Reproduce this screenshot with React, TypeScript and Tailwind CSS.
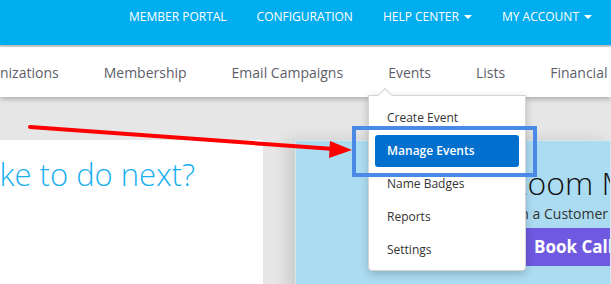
const topLinks = [
  { label: "MEMBER PORTAL", caret: false },
  { label: "CONFIGURATION", caret: false },
  { label: "HELP CENTER", caret: true },
  { label: "MY ACCOUNT", caret: true },
]

const navLinks = ["Organizations", "Membership", "Email Campaigns", "Events", "Lists", "Financial"]

const menuItems = ["Create Event", "Manage Events", "Name Badges", "Reports", "Settings"]

const Caret = () => (
  <span className="inline-block ml-[5px] w-0 h-0 border-l-[4px] border-r-[4px] border-t-[4px] border-l-transparent border-r-transparent border-t-white" />
)

export default function App() {
  return (
    <div className="relative w-[611px] h-[284px] overflow-hidden bg-[#e6e6e6] font-['Open_Sans',sans-serif]">
      {/* top bar */}
      <div className="relative z-20 h-[45px] bg-[#00adee] flex items-center justify-end gap-[30px] pr-[19px] pb-[12px] shadow-[0_1px_2px_rgba(0,0,0,0.25)]">
        {topLinks.map((l) => (
          <div key={l.label} className="flex items-center text-white text-[12px]">
            {l.label}
            {l.caret && <Caret />}
          </div>
        ))}
      </div>

      {/* nav bar */}
      <div className="relative z-10 mt-[2px] h-[50px] bg-white flex items-center shadow-[0_2px_5px_rgba(0,0,0,0.25)] overflow-hidden">
        <div className="flex items-center gap-[45px] ml-[-32px] whitespace-nowrap text-[14px] text-[#5e5e6a]">
          {navLinks.map((n) => (
            <span key={n}>{n}</span>
          ))}
        </div>
      </div>

      {/* content */}
      <div className="flex gap-[32px] mt-[43px] h-[150px]">
        <div className="w-[263px] bg-white flex justify-end overflow-hidden pr-[68px] pt-[14px]">
          <div className="whitespace-nowrap text-[31px] font-light text-[#1ab0ef] leading-[40px]">
            What would you like to do next?
          </div>
        </div>
        <div className="flex-1 bg-[#acdcf1] border border-[#d9e6ec] shadow-[-8px_0_14px_rgba(0,0,0,0.12)] pt-[22px] pl-[213px] overflow-hidden whitespace-nowrap">
          <div className="text-[32px] font-light text-[#111] leading-[40px]">Zoom Meeting</div>
          <div className="ml-[-8px] text-[14px] text-[#333] leading-[18px] mt-[2px]">with a Customer</div>
          <div className="ml-[3px] mt-[5px] h-[38px] w-[140px] bg-[#7059e1] flex items-center pl-[22px] text-white text-[17px] font-bold">
            Book Call
          </div>
        </div>
      </div>

      {/* events dropdown */}
      <div className="absolute z-30 left-[368px] top-[95px] w-[158px] h-[176px] bg-white border border-[#d4d4d4] rounded-b-[4px] shadow-[0_3px_8px_rgba(0,0,0,0.2)] pt-[5px] pb-[6px] px-[6px]">
        <div className="absolute left-[11px] top-[-6px] w-[10px] h-[10px] bg-white border-l border-t border-[#d4d4d4] rotate-45" />
        {menuItems.map((m) => (
          <div key={m} className="h-[33px] flex items-center">
            <div
              className={
                m === "Manage Events"
                  ? "w-full h-[32px] flex items-center px-[12px] rounded-[3px] bg-[#006fce] text-white text-[12px] font-semibold"
                  : "w-full flex items-center px-[12px] text-[#333] text-[12px]"
              }
            >
              {m}
            </div>
          </div>
        ))}
      </div>

      {/* highlight box */}
      <div className="absolute z-40 left-[352px] top-[126px] w-[185px] h-[51px] border-[4px] border-[#4a89e6]" />

      {/* red arrow */}
      <svg className="absolute z-40 left-0 top-0" width="611" height="284" viewBox="0 0 611 284">
        <line x1="30" y1="127" x2="334" y2="149" stroke="#ff0000" strokeWidth="4" strokeLinecap="round" />
        <polygon points="352,150 330,141 329,158" fill="#ff0000" />
      </svg>
    </div>
  )
}
